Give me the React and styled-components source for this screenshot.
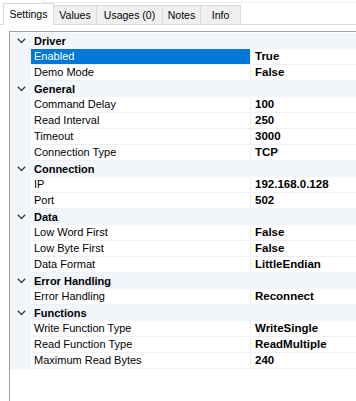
import React from "react";
import styled, { createGlobalStyle } from "styled-components";

const GlobalStyle = createGlobalStyle`
  body {
    margin: 0;
    background: #ffffff;
    font-family: "Liberation Sans", Arial, sans-serif;
    font-size: 12px;
    color: #000;
  }
`;

const tabs = [
  { label: "Settings", width: 51, active: true },
  { label: "Values", width: 44 },
  { label: "Usages (0)", width: 67 },
  { label: "Notes", width: 39 },
  { label: "Info", width: 41 },
];

const groups = [
  {
    name: "Driver",
    items: [
      ["Enabled", "True"],
      ["Demo Mode", "False"],
    ],
  },
  {
    name: "General",
    items: [
      ["Command Delay", "100"],
      ["Read Interval", "250"],
      ["Timeout", "3000"],
      ["Connection Type", "TCP"],
    ],
  },
  {
    name: "Connection",
    items: [
      ["IP", "192.168.0.128"],
      ["Port", "502"],
    ],
  },
  {
    name: "Data",
    items: [
      ["Low Word First", "False"],
      ["Low Byte First", "False"],
      ["Data Format", "LittleEndian"],
    ],
  },
  {
    name: "Error Handling",
    items: [["Error Handling", "Reconnect"]],
  },
  {
    name: "Functions",
    items: [
      ["Write Function Type", "WriteSingle"],
      ["Read Function Type", "ReadMultiple"],
      ["Maximum Read Bytes", "240"],
    ],
  },
];

function Chevron() {
  return (
    <svg width="9" height="6" viewBox="0 0 9 6">
      <polyline
        points="0.8,0.8 4.5,4.5 8.2,0.8"
        fill="none"
        stroke="#404040"
        strokeWidth="1.4"
      />
    </svg>
  );
}

export default function App() {
  return (
    <>
      <GlobalStyle />
      <TopStrip />
      <TabBar>
        {tabs.map((t) => (
          <Tab key={t.label} $active={t.active} $width={t.width}>
            {t.label}
          </Tab>
        ))}
      </TabBar>
      <Panel>
        <Grid>
          {groups.map((g) => (
            <React.Fragment key={g.name}>
              <CategoryRow>
                <Gutter>
                  <Chevron />
                </Gutter>
                <CategoryName>{g.name}</CategoryName>
              </CategoryRow>
              {g.items.map(([name, value]) => (
                <PropRow key={g.name + name}>
                  <Gutter />
                  <PropName $selected={name === "Enabled"}>{name}</PropName>
                  <PropValue>{value}</PropValue>
                </PropRow>
              ))}
            </React.Fragment>
          ))}
        </Grid>
      </Panel>
    </>
  );
}

const TopStrip = styled.div`
  height: 2px;
  margin-left: 43px;
  border-left: 1px solid #e6e6e6;
  border-bottom: 1px solid #ececf2;
`;

const TabBar = styled.div`
  display: flex;
  align-items: flex-end;
  height: 20px;
  margin-top: 1px;
  padding-left: 3px;
  border-bottom: 1px solid #d9d9d9;
`;

const Tab = styled.div`
  box-sizing: border-box;
  width: ${({ $width }) => $width}px;
  height: ${({ $active }) => ($active ? 22 : 19)}px;
  margin-bottom: ${({ $active }) => ($active ? -1 : 0)}px;
  margin-right: -1px;
  display: flex;
  align-items: center;
  justify-content: center;
  padding-bottom: ${({ $active }) => ($active ? 2 : 0)}px;
  background: ${({ $active }) => ($active ? "#ffffff" : "#f0f0f0")};
  border: 1px solid #d9d9d9;
  border-bottom: none;
  position: relative;
  z-index: ${({ $active }) => ($active ? 1 : 0)};
  font-size: 10.5px;
  color: #000;
  white-space: nowrap;
`;

const Panel = styled.div`
  margin-top: 6px;
  margin-left: 9px;
  padding-top: 1px;
  min-height: 368px;
  border-left: 1px solid #a0a0a0;
  border-top: 1px solid #a0a0a0;
`;

const Grid = styled.div`
  display: flex;
  flex-direction: column;
`;

const CategoryRow = styled.div`
  display: grid;
  grid-template-columns: 21px 1fr;
  height: 16px;
  background: #f2f5fa;
`;

const Gutter = styled.div`
  display: flex;
  align-items: center;
  justify-content: center;
  padding-left: 2px;
  background: #f2f5fa;
`;

const CategoryName = styled.div`
  padding-left: 3px;
  font-size: 11px;
  font-weight: bold;
  line-height: 16px;
  white-space: nowrap;
`;

const PropRow = styled.div`
  display: grid;
  grid-template-columns: 21px 219px 1fr;
  height: 16px;
`;

const PropName = styled.div`
  box-sizing: border-box;
  padding-left: 3px;
  font-size: 11px;
  line-height: 15px;
  border-bottom: 1px solid #f0f0f0;
  background: ${({ $selected }) => ($selected ? "#0078d7" : "#ffffff")};
  color: ${({ $selected }) => ($selected ? "#ffffff" : "#000")};
  white-space: nowrap;
  overflow: hidden;
`;

const PropValue = styled.div`
  box-sizing: border-box;
  padding-left: 4px;
  font-size: 11.5px;
  line-height: 15px;
  font-weight: bold;
  border-left: 1px solid #f0f0f0;
  border-bottom: 1px solid #f0f0f0;
  background: #ffffff;
  white-space: nowrap;
`;
